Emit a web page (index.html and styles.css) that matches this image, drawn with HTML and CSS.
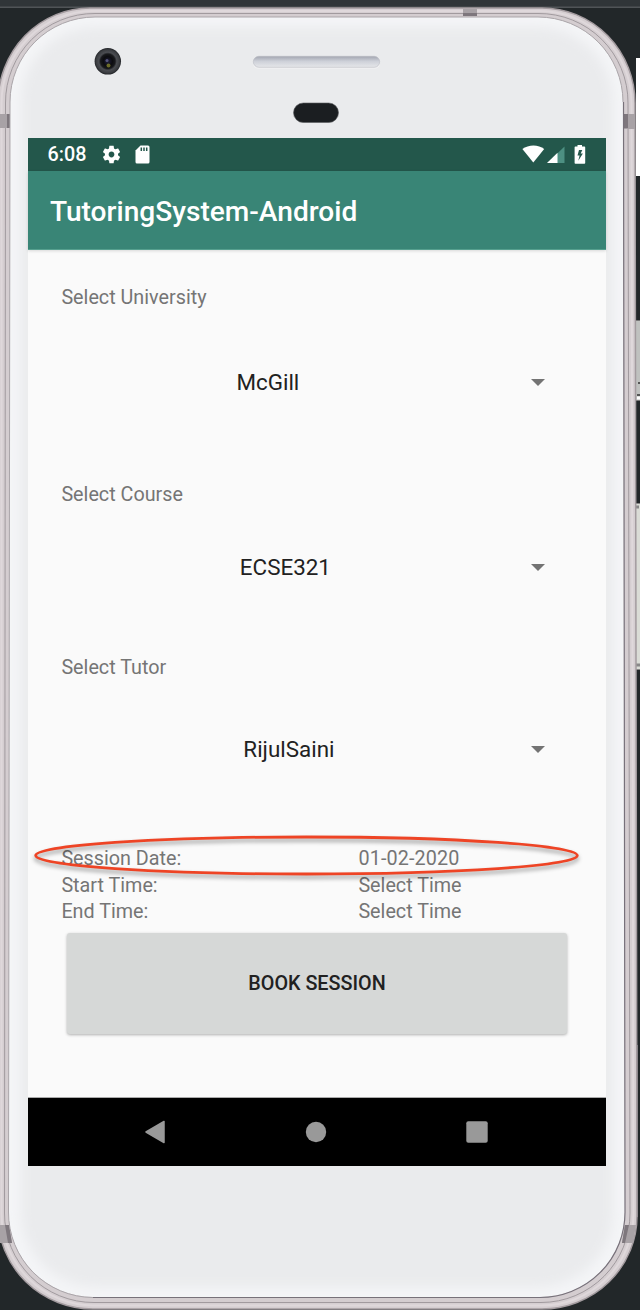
FILE: index.html
```html
<!DOCTYPE html>
<html lang="en">
<head>
<meta charset="utf-8">
<title>TutoringSystem-Android</title>
<link rel="stylesheet" href="styles.css">
</head>
<body>
<div class="desk">
  <svg class="frame" width="640" height="1310" viewBox="0 0 640 1310" aria-hidden="true">
    <defs>
      <filter id="soft" x="-10%" y="-10%" width="120%" height="120%"><feGaussianBlur stdDeviation="6"/></filter>
      <linearGradient id="slot" x1="0" y1="0" x2="0" y2="1"><stop offset="0" stop-color="#a3a6b1"/><stop offset=".45" stop-color="#cdd0d8"/><stop offset="1" stop-color="#e6e7ea"/></linearGradient>
      <radialGradient id="lens"><stop offset="0" stop-color="#20203c"/><stop offset=".35" stop-color="#0c0c10"/><stop offset=".55" stop-color="#18191c"/><stop offset=".68" stop-color="#4b4d52"/><stop offset=".88" stop-color="#3b3d41"/><stop offset="1" stop-color="#222428"/></radialGradient>
      <clipPath id="faceClip"><path d="M95 17H538A85 85 0 0 1 623 102L625 1212A85 85 0 0 1 540 1297H93A85 85 0 0 1 8.500 1212L10 102A85 85 0 0 1 95 17Z"/></clipPath>
    </defs>
    <rect width="640" height="1310" fill="#222729"/>
    <rect width="640" height="7" fill="#303538"/>
    <rect y="6.500" width="640" height="1.500" fill="#505457"/>
    <rect x="636" y="58" width="4" height="118" fill="#fff"/>
    <g>
      <rect x="634" y="320.500" width="8" height="80" rx="2" fill="#bfc1bf" stroke="#777"/>
      <path d="M638 383h2M637 395h3" stroke="#333" stroke-width="1.500"/>
      <path d="M637 398h3" stroke="#fff" stroke-width="3"/>
      <rect x="634" y="503.500" width="8" height="166" rx="2" fill="#dadcd6" stroke="#858585"/>
      <path d="M636 507h3M636 665h4" stroke="#888" stroke-width="3"/>
      <rect x="636" y="1045" width="2" height="172" fill="#777379"/>
    </g>
    <path d="M90 8H542A93 95 0 0 1 635 103L637 1216A95 93 0 0 1 542 1309H93A95 93 0 0 1 -2 1216V103A92 95 0 0 1 90 8Z" fill="#d5ced1" stroke="#a39b9f" stroke-width="1.500"/>
    <path d="M92 11H540A92 92 0 0 1 631.500 103L633.500 1214A92 92 0 0 1 541 1305.500H93A92 92 0 0 1 1.500 1214V103A92 92 0 0 1 92 11Z" fill="none" stroke="#dfd8db" stroke-width="2"/>
    <path d="M95 13.500H538A89 89 0 0 1 628 103L630 1213A89 89 0 0 1 541 1302.500H94A89 89 0 0 1 4.500 1213L5.500 103A89 89 0 0 1 95 13.500Z" fill="#d4cdd0" stroke="#9b9498" stroke-width=".9"/>
    <path d="M0 114H10V128H0ZM624 114H635V129H624ZM463 9H477V16H463ZM0 1225H9L12 1243H0ZM625 1225H636L633 1243H622Z" fill="#a8a2a6"/>
    <path d="M7 114h3v14h-3zM624 114h4v14h-4zM463 13h14v3h-14zM5 1225h4l3 18h-4zM625 1225h4l-4 18h-3z" fill="#7e777d"/>
    <g clip-path="url(#faceClip)">
      <path d="M0 0H640V1310H0Z" fill="#f4f5f7"/>
      <rect x="21" y="27" width="592" height="1260" rx="75" fill="#eaebed" filter="url(#soft)"/>
    </g>
    <path d="M93 1297.500A85 85 0 0 1 8.500 1212L10 102A85 85 0 0 1 95 17H538A85 85 0 0 1 623 102" fill="none" stroke="#aaa5a9" stroke-width="1"/>
    <path d="M623.500 102L625 1212A85 85 0 0 1 540 1297.500H93" fill="none" stroke="#77717a" stroke-width="1.200"/>
    <circle cx="107.800" cy="61.300" r="13.200" fill="url(#lens)"/>
    <circle cx="108.500" cy="65.500" r="2" fill="#85842d" opacity=".8"/>
    <circle cx="107" cy="60.500" r="1.500" fill="#55557c"/>
    <rect x="253" y="57" width="127" height="11.500" rx="5.500" fill="#f4f4f5"/>
    <rect x="253.300" y="56.300" width="126.400" height="11" rx="5.500" fill="url(#slot)" stroke="#b9bbc3" stroke-width=".6"/>
    <rect x="293.500" y="103" width="45" height="19.500" rx="9.750" fill="#1b1e21" stroke="#5b5d60" stroke-width=".6"/>
  </svg>

  <main class="screen">
    <div class="status">
      <span class="clock">6:08</span>
      <svg class="gear" width="21" height="21" viewBox="0 0 24 24"><path fill="#fff" fill-rule="evenodd" d="M19.430 12.980c.04-.32.070-.64.070-.98s-.03-.66-.07-.98l2.110-1.650c.19-.15.240-.42.120-.64l-2-3.460c-.12-.22-.39-.3-.61-.22l-2.490 1c-.52-.4-1.080-.73-1.690-.98l-.38-2.650C14.460 2.180 14.250 2 14 2h-4c-.25 0-.46.180-.49.420l-.38 2.650c-.61.250-1.170.59-1.690.980l-2.490-1c-.23-.09-.49 0-.61.220l-2 3.460c-.13.220-.07.490.120.640l2.110 1.650c-.04.320-.07.650-.07.980s.03.660.070.980l-2.110 1.650c-.19.150-.24.420-.12.640l2 3.460c.12.220.39.300.61.220l2.490-1c.52.400 1.080.730 1.690.980l.38 2.650c.03.240.24.420.49.420h4c.25 0 .46-.18.490-.42l.38-2.650c.61-.25 1.170-.59 1.690-.98l2.490 1c.23.090.49 0 .61-.22l2-3.460c.12-.22.070-.49-.12-.64l-2.110-1.650zM12 15.300c-1.820 0-3.300-1.480-3.300-3.300s1.480-3.300 3.300-3.300 3.300 1.480 3.300 3.300-1.480 3.300-3.300 3.300z"/></svg>
      <svg class="card" width="15" height="19" viewBox="0 0 15 19"><path fill="#fff" d="M5.500.5H13a1.500 1.500 0 0 1 1.500 1.500V17a1.500 1.500 0 0 1-1.500 1.500H2A1.500 1.500 0 0 1 .5 17V5.500Z"/><path d="M6.300 2.500v3.500M9 2.500v3.500M11.700 2.500v3.500" stroke="#23574b" stroke-width="1.500"/></svg>
      <svg class="signals" width="66" height="21" viewBox="0 0 66 21"><path fill="#fff" d="M.4 5C6.500.2 16.500.2 22.200 5L11.300 18.500Z"/><path fill="#4d9082" d="M42.500 2.500V19H25.500Z"/><path fill="#fff" d="M35.500 8.800V19H25Z"/><path fill="#fff" d="M55.500 2.500V1h4.500v1.500h2.500a.7.700 0 0 1 .7.700V19a.8.800 0 0 1-.8.800h-9a.8.800 0 0 1-.8-.8V3.200a.7.700 0 0 1 .7-.7Z"/><path fill="#23574b" d="M60.300 6H57L55.500 11.500H57.600L56.300 16.800L60.900 9.500H58.700Z"/></svg>
    </div>
    <header class="appbar"><h1>TutoringSystem-Android</h1></header>
    <section class="form">
      <label class="label">Select University</label>
      <div class="spinner first"><span>McGill</span><i class="caret"></i></div>
      <label class="label">Select Course</label>
      <div class="spinner second"><span>ECSE321</span><i class="caret"></i></div>
      <label class="label">Select Tutor</label>
      <div class="spinner third"><span>RijulSaini</span><i class="caret"></i></div>
      <div class="times">
        <span>Session Date:</span><span class="date">01-02-2020</span>
        <span>Start Time:</span><span>Select Time</span>
        <span>End Time:</span><span>Select Time</span>
      </div>
      <button class="book">BOOK SESSION</button>
    </section>
    <nav class="nav">
      <svg width="22" height="24" viewBox="0 0 22 24"><path d="M2 12L20 1.500V22.500Z" fill="#999" stroke="#999" stroke-width="1.500" stroke-linejoin="round"/></svg>
      <svg width="22" height="22" viewBox="0 0 22 22"><circle cx="11" cy="11" r="10.200" fill="#999"/></svg>
      <svg width="22" height="22" viewBox="0 0 22 22"><rect x=".3" y=".3" width="21.400" height="21.400" rx="2" fill="#999"/></svg>
    </nav>
  </main>

  <svg class="ring" width="554" height="50" viewBox="0 0 554 50" aria-hidden="true"><ellipse cx="276.500" cy="22.500" rx="270.800" ry="18.500" fill="none" stroke="#ee4425" stroke-width="2.800"/></svg>
</div>
</body>
</html>
```
FILE: styles.css
```css
body {
  margin: 0;
  background: #222729;
  font-family: Roboto, "Liberation Sans", sans-serif;
}
.desk {
  position: relative;
  box-sizing: border-box;
  width: 640px;
  height: 1310px;
  padding: 138px 34px 0 28px;
  overflow: hidden;
}
.frame {
  position: absolute;
  top: 0;
  left: 0;
}
.screen {
  position: relative;
  display: flex;
  flex-direction: column;
  width: 578px;
  height: 1028px;
  background: #fafafa;
}
.status {
  display: flex;
  align-items: center;
  box-sizing: border-box;
  height: 33px;
  padding: 0 18.500px 0 19.500px;
  background: #23574b;
  color: #fff;
}
.clock {
  width: 53.500px;
  font-size: 19.800px;
  font-weight: 500;
}
.card {
  margin-left: 13px;
}
.signals {
  margin: 0 0 1px auto;
}
.appbar {
  display: flex;
  align-items: center;
  box-sizing: border-box;
  height: 79px;
  padding: 4px 22px 0;
  border-bottom: 1px solid #56a08f;
  background: #398576;
  box-shadow: 0 1px 3px rgba(0, 0, 0, .14);
}
h1 {
  margin: 0;
  color: #fff;
  font-size: 28.100px;
  font-weight: 500;
  line-height: 34px;
  white-space: nowrap;
}
.form {
  display: flex;
  flex: 1;
  flex-direction: column;
  padding: 35px 33px 0 33.400px;
}
.label,
.times {
  color: #757575;
  font-size: 19.750px;
  line-height: 26px;
}
.spinner {
  display: grid;
  grid-template-columns: 413px 1fr;
  align-items: center;
  height: 60px;
  color: #212121;
  font-size: 22.400px;
  text-align: center;
}
.first {
  margin: 41px 0 70px;
}
.second {
  margin: 29px 0 58px;
}
.second span {
  padding-left: 35px;
}
.third {
  margin: 38px 0 67px;
}
.third span {
  padding-left: 42px;
}
.caret {
  width: 0;
  margin-left: 57px;
  border: 7px solid transparent;
  border-top-color: #737373;
  border-bottom: 0;
}
.times {
  display: grid;
  grid-template-columns: 297px 1fr;
  line-height: 26.600px;
}
.date {
  letter-spacing: .15px;
}
.book {
  height: 101px;
  margin: 7px 6px 0 5.600px;
  padding: 0;
  border: 0;
  border-radius: 3px;
  background: #d6d8d7;
  box-shadow: 0 1px 3px rgba(0, 0, 0, .3);
  color: #212121;
  font-family: inherit;
  font-size: 19.750px;
  font-weight: 500;
}
.nav {
  display: flex;
  align-items: center;
  justify-content: space-between;
  box-sizing: border-box;
  height: 69px;
  padding: 0 118.500px 1px 116px;
  border-top: 1px solid #aaa;
  background: #000;
}
.ring {
  position: absolute;
  top: 833px;
  left: 30px;
  filter: drop-shadow(0 3px 2px rgba(0, 0, 0, .4));
}
```
